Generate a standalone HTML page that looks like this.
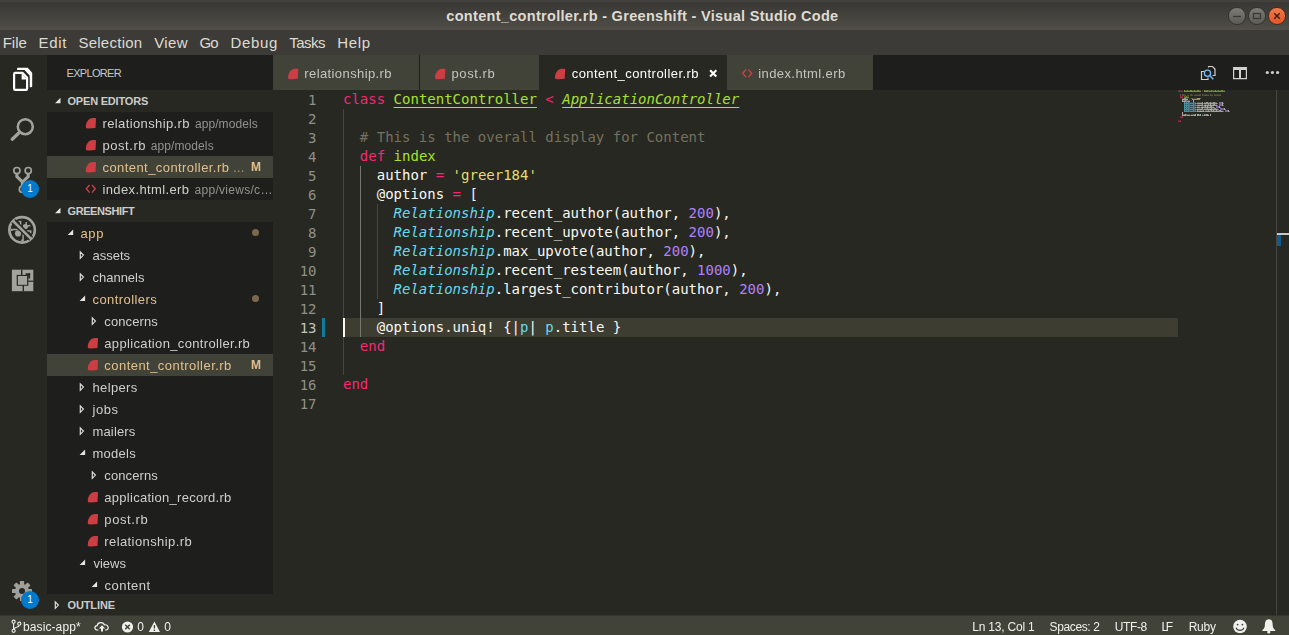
<!DOCTYPE html>
<html lang="en">
<head>
<meta charset="utf-8">
<title>content_controller.rb - Greenshift - Visual Studio Code</title>
<style>
*{box-sizing:border-box;margin:0;padding:0}
html,body{width:1289px;height:635px;overflow:hidden;background:#272822}
body{position:relative;font-family:"Liberation Sans","DejaVu Sans",sans-serif;font-size:13px;color:#f8f8f2}
.abs{position:absolute}
.t{position:absolute;white-space:pre;line-height:20px;height:20px}
#titlebar{left:0;top:0;width:1289px;height:30px;background:linear-gradient(#42413c 0,#42413c 5%,#3a3935 8%,#3c3b37 25%,#514f48 100%)}
#menubar{left:0;top:30px;width:1289px;height:25px;background:#3c3b37}
#activity{left:0;top:55px;width:47px;height:561px;background:#272822}
#sidebar{left:47px;top:55px;width:226px;height:539px;background:#1e1f1c}
.hdr{position:absolute;left:47px;width:226px;height:22px;background:#272822}
.sel{position:absolute;left:47px;width:226px;height:22px;background:#414339}
#tabs{left:273px;top:55px;width:1016px;height:35px;background:#1e1f1c}
.tab{position:absolute;top:55px;height:35px;background:#414339}
.tab.active{background:#272822}
#status{left:0;top:615px;width:1289px;height:20px;background:#414339;border-top:1px solid #34352e}
#editor{left:273px;top:90px;width:1016px;height:525px;background:#272822;overflow:hidden}
.ln{position:absolute;left:0;width:43.5px;text-align:right;height:19px;line-height:21px;font-family:"DejaVu Sans Mono","Liberation Mono",monospace;font-size:14px;color:#90908a}
.ln.cur{color:#c2c2bf}
.cl{position:absolute;left:70px;height:19px;line-height:19px;font-family:"DejaVu Sans Mono","Liberation Mono",monospace;font-size:14px;color:#f8f8f2;white-space:pre}
.k{color:#f92672}.g{color:#a6e22e}.c{color:#75715e}.s{color:#e6db74}.n{color:#ae81ff}.b{color:#66d9ef}.i{font-style:italic}.u{text-decoration:underline;text-decoration-thickness:1px;text-underline-offset:2.5px}
.gl{position:absolute;left:0;top:0;width:1289px;height:635px;will-change:transform}
.guide{position:absolute;width:1px;background:#464741}
.badge{position:absolute;width:18px;height:18px;border-radius:9px;background:#007acc}
.wb{position:absolute;top:7.4px;width:17.4px;height:17.4px;border-radius:50%;border:1px solid #33322e;background:linear-gradient(#7d7b75,#5d5b55)}
</style>
</head>
<body>
<div id="titlebar" class="abs"></div>
<div id="menubar" class="abs"></div>
<!-- window buttons -->
<div class="wb" style="left:1228.3px"></div>
<div class="wb" style="left:1248.3px"></div>
<div class="wb" style="left:1268.3px;background:linear-gradient(#f2794a,#e35527);border-color:#4a2a1c"></div>
<svg class="abs" style="left:1228px;top:7px" width="60" height="19" viewBox="0 0 60 19">
<path d="M5 9.5 H13" stroke="#3a3935" stroke-width="1.3"/>
<rect x="25.5" y="6.5" width="7" height="5" fill="none" stroke="#3a3935" stroke-width="1.3"/>
<path d="M46.2 6.2 L51.8 11.8 M51.8 6.2 L46.2 11.8" stroke="#3d1d10" stroke-width="1.4"/>
</svg>

<div id="activity" class="abs"></div>
<div id="sidebar" class="abs"></div>
<div class="hdr" style="top:90px"></div>
<div class="hdr" style="top:200px"></div>
<div class="sel" style="top:156px"></div>
<div class="sel" style="top:354px"></div>
<div id="tabs" class="abs"></div>
<div class="tab" style="left:273px;width:146px"></div>
<div class="tab" style="left:420px;width:118.5px"></div>
<div class="tab active" style="left:539px;width:187.5px"></div>
<div class="tab" style="left:727px;width:146px"></div>

<div id="editor" class="abs">
<div class="abs" style="left:70px;top:228px;width:835px;height:19px;background:#3e3d32"></div>
<div class="guide" style="left:70px;top:19px;height:266px"></div>
<div class="guide" style="left:87px;top:76px;height:171px;background:#767771"></div>
<div class="guide" style="left:104px;top:114px;height:95px"></div>
<div class="abs" style="left:70px;top:228px;width:2px;height:19px;background:#f8f8f0"></div>
<div class="abs" style="left:49px;top:228px;width:3px;height:19px;background:#0c7d9d"></div>
<div class="ln" style="top:0px">1</div><div class="cl" style="top:0px"><span class="k">class</span> <span class="g u">ContentController</span> <span class="k">&lt;</span> <span class="g i u">ApplicationController</span></div>
<div class="ln" style="top:19px">2</div><div class="cl" style="top:19px"></div>
<div class="ln" style="top:38px">3</div><div class="cl" style="top:38px">  <span class="c"># This is the overall display for Content</span></div>
<div class="ln" style="top:57px">4</div><div class="cl" style="top:57px">  <span class="k">def</span> <span class="g">index</span></div>
<div class="ln" style="top:76px">5</div><div class="cl" style="top:76px">    author <span class="k">=</span> <span class="s">&#x27;greer184&#x27;</span></div>
<div class="ln" style="top:95px">6</div><div class="cl" style="top:95px">    @options <span class="k">=</span> [</div>
<div class="ln" style="top:114px">7</div><div class="cl" style="top:114px">      <span class="b i">Relationship</span>.recent_author(author, <span class="n">200</span>),</div>
<div class="ln" style="top:133px">8</div><div class="cl" style="top:133px">      <span class="b i">Relationship</span>.recent_upvote(author, <span class="n">200</span>),</div>
<div class="ln" style="top:152px">9</div><div class="cl" style="top:152px">      <span class="b i">Relationship</span>.max_upvote(author, <span class="n">200</span>),</div>
<div class="ln" style="top:171px">10</div><div class="cl" style="top:171px">      <span class="b i">Relationship</span>.recent_resteem(author, <span class="n">1000</span>),</div>
<div class="ln" style="top:190px">11</div><div class="cl" style="top:190px">      <span class="b i">Relationship</span>.largest_contributor(author, <span class="n">200</span>),</div>
<div class="ln" style="top:209px">12</div><div class="cl" style="top:209px">    ]</div>
<div class="ln cur" style="top:228px">13</div><div class="cl" style="top:228px">    @options.uniq! {|<span class="b">p</span>| <span class="b">p</span>.title }</div>
<div class="ln" style="top:247px">14</div><div class="cl" style="top:247px">  <span class="k">end</span></div>
<div class="ln" style="top:266px">15</div><div class="cl" style="top:266px"></div>
<div class="ln" style="top:285px">16</div><div class="cl" style="top:285px"><span class="k">end</span></div>
<div class="ln" style="top:304px">17</div><div class="cl" style="top:304px"></div>
<div class="abs" style="left:1003px;top:0;width:1px;height:525px;background:#46463f"></div>
<div class="abs" style="left:1004px;top:143px;width:12px;height:2px;background:#c8c8c0"></div>
<div class="abs" style="left:1004px;top:145px;width:4px;height:11px;background:#125b8d"></div>
</div>
<svg class="abs" style="left:1178px;top:90px" width="98" height="40" viewBox="0 0 98 40" fill="none" stroke-width="1" shape-rendering="crispEdges"><path d="M0 0.5h1M2 0.5h1M3 0.5h1M4 0.5h1M24 0.5h1M3 6.5h1M11 8.5h1M13 10.5h1M2 26.5h1M3 26.5h1M0 30.5h1M1 30.5h1" stroke="#f92672" stroke-opacity="0.22"/><path d="M0 1.5h1M1 1.5h1M2 1.5h1M3 1.5h1M4 1.5h1M2 7.5h1M3 7.5h1M4 7.5h1M2 27.5h1M3 27.5h1M4 27.5h1M0 31.5h1M1 31.5h1M2 31.5h1" stroke="#f92672" stroke-opacity="0.58"/><path d="M1 0.5h1M2 6.5h1M4 6.5h1M4 26.5h1M2 30.5h1" stroke="#f92672" stroke-opacity="0.54"/><path d="M6 0.5h1M6 1.5h1M13 0.5h1M13 1.5h1M26 0.5h1M26 1.5h1M37 0.5h1M37 1.5h1" stroke="#a6e22e" stroke-opacity="0.61"/><path d="M7 0.5h1M8 0.5h1M10 0.5h1M11 0.5h1M14 0.5h1M15 0.5h1M17 0.5h1M18 0.5h1M21 0.5h1M22 0.5h1M31 0.5h1M32 0.5h1M35 0.5h1M36 0.5h1M38 0.5h1M39 0.5h1M41 0.5h1M42 0.5h1M45 0.5h1M46 0.5h1M7 6.5h1M9 6.5h1M10 6.5h1" stroke="#a6e22e" stroke-opacity="0.22"/><path d="M7 1.5h1M8 1.5h1M9 1.5h1M10 1.5h1M11 1.5h1M12 1.5h1M14 1.5h1M15 1.5h1M16 1.5h1M17 1.5h1M18 1.5h1M19 1.5h1M20 1.5h1M21 1.5h1M22 1.5h1M29 1.5h1M31 1.5h1M32 1.5h1M33 1.5h1M35 1.5h1M36 1.5h1M38 1.5h1M39 1.5h1M40 1.5h1M41 1.5h1M42 1.5h1M43 1.5h1M44 1.5h1M45 1.5h1M46 1.5h1M7 7.5h1M8 7.5h1M9 7.5h1M10 7.5h1" stroke="#a6e22e" stroke-opacity="0.58"/><path d="M9 0.5h1M12 0.5h1M16 0.5h1M19 0.5h1M20 0.5h1M29 0.5h1M33 0.5h1M40 0.5h1M43 0.5h1M44 0.5h1M8 6.5h1" stroke="#a6e22e" stroke-opacity="0.54"/><path d="M24 1.5h1M11 9.5h1M13 11.5h1" stroke="#f92672" stroke-opacity="0.29"/><path d="M27 0.5h1M28 0.5h1" stroke="#a6e22e" stroke-opacity="0.32"/><path d="M27 1.5h1M28 1.5h1" stroke="#a6e22e" stroke-opacity="0.68"/><path d="M30 0.5h1M34 0.5h1M6 6.5h1" stroke="#a6e22e" stroke-opacity="0.36"/><path d="M30 1.5h1M34 1.5h1M6 7.5h1" stroke="#a6e22e" stroke-opacity="0.43"/><path d="M2 4.5h1M2 5.5h1M4 4.5h1M4 5.5h1M36 4.5h1M36 5.5h1" stroke="#75715e" stroke-opacity="0.61"/><path d="M5 4.5h1M12 4.5h1M13 4.5h1M21 4.5h1M22 4.5h1M24 4.5h1M28 4.5h1M32 4.5h1M39 4.5h1M42 4.5h1" stroke="#75715e" stroke-opacity="0.54"/><path d="M5 5.5h1M7 5.5h1M10 5.5h1M12 5.5h1M13 5.5h1M14 5.5h1M16 5.5h1M17 5.5h1M18 5.5h1M19 5.5h1M20 5.5h1M21 5.5h1M22 5.5h1M24 5.5h1M26 5.5h1M28 5.5h1M29 5.5h1M32 5.5h1M33 5.5h1M34 5.5h1M37 5.5h1M38 5.5h1M39 5.5h1M40 5.5h1M41 5.5h1M42 5.5h1" stroke="#75715e" stroke-opacity="0.58"/><path d="M6 4.5h1M9 4.5h1M25 4.5h1" stroke="#75715e" stroke-opacity="0.36"/><path d="M6 5.5h1M9 5.5h1M25 5.5h1" stroke="#75715e" stroke-opacity="0.43"/><path d="M7 4.5h1M10 4.5h1M14 4.5h1M16 4.5h1M17 4.5h1M18 4.5h1M19 4.5h1M20 4.5h1M26 4.5h1M29 4.5h1M33 4.5h1M34 4.5h1M37 4.5h1M38 4.5h1M40 4.5h1M41 4.5h1" stroke="#75715e" stroke-opacity="0.22"/><path d="M27 4.5h1M30 4.5h1" stroke="#75715e" stroke-opacity="0.32"/><path d="M27 5.5h1M30 5.5h1" stroke="#75715e" stroke-opacity="0.68"/><path d="M4 8.5h1M5 8.5h1M8 8.5h1M9 8.5h1M5 10.5h1M9 10.5h1M10 10.5h1M11 10.5h1M19 12.5h1M20 12.5h1M21 12.5h1M22 12.5h1M23 12.5h1M26 12.5h1M27 12.5h1M30 12.5h1M31 12.5h1M33 12.5h1M34 12.5h1M37 12.5h1M38 12.5h1M19 14.5h1M20 14.5h1M21 14.5h1M22 14.5h1M23 14.5h1M26 14.5h1M28 14.5h1M29 14.5h1M31 14.5h1M33 14.5h1M34 14.5h1M37 14.5h1M38 14.5h1M20 16.5h1M21 16.5h1M23 16.5h1M25 16.5h1M26 16.5h1M28 16.5h1M30 16.5h1M31 16.5h1M34 16.5h1M35 16.5h1M19 18.5h1M20 18.5h1M21 18.5h1M22 18.5h1M23 18.5h1M26 18.5h1M27 18.5h1M28 18.5h1M30 18.5h1M31 18.5h1M34 18.5h1M35 18.5h1M38 18.5h1M39 18.5h1M20 20.5h1M21 20.5h1M23 20.5h1M24 20.5h1M27 20.5h1M28 20.5h1M29 20.5h1M31 20.5h1M34 20.5h1M36 20.5h1M37 20.5h1M39 20.5h1M40 20.5h1M43 20.5h1M44 20.5h1M5 24.5h1M9 24.5h1M10 24.5h1M11 24.5h1M13 24.5h1M14 24.5h1M30 24.5h1" stroke="#f8f8f2" stroke-opacity="0.22"/><path d="M4 9.5h1M5 9.5h1M6 9.5h1M7 9.5h1M8 9.5h1M9 9.5h1M5 11.5h1M7 11.5h1M9 11.5h1M10 11.5h1M11 11.5h1M19 13.5h1M20 13.5h1M21 13.5h1M22 13.5h1M23 13.5h1M24 13.5h1M26 13.5h1M27 13.5h1M28 13.5h1M29 13.5h1M30 13.5h1M31 13.5h1M33 13.5h1M34 13.5h1M35 13.5h1M36 13.5h1M37 13.5h1M38 13.5h1M19 15.5h1M20 15.5h1M21 15.5h1M22 15.5h1M23 15.5h1M24 15.5h1M26 15.5h1M28 15.5h1M29 15.5h1M30 15.5h1M31 15.5h1M33 15.5h1M34 15.5h1M35 15.5h1M36 15.5h1M37 15.5h1M38 15.5h1M20 17.5h1M21 17.5h1M23 17.5h1M25 17.5h1M26 17.5h1M27 17.5h1M28 17.5h1M30 17.5h1M31 17.5h1M32 17.5h1M33 17.5h1M34 17.5h1M35 17.5h1M19 19.5h1M20 19.5h1M21 19.5h1M22 19.5h1M23 19.5h1M24 19.5h1M26 19.5h1M27 19.5h1M28 19.5h1M29 19.5h1M30 19.5h1M31 19.5h1M34 19.5h1M35 19.5h1M36 19.5h1M37 19.5h1M38 19.5h1M39 19.5h1M19 21.5h1M20 21.5h1M21 21.5h1M23 21.5h1M24 21.5h1M25 21.5h1M27 21.5h1M28 21.5h1M29 21.5h1M30 21.5h1M31 21.5h1M33 21.5h1M34 21.5h1M35 21.5h1M36 21.5h1M37 21.5h1M39 21.5h1M40 21.5h1M41 21.5h1M42 21.5h1M43 21.5h1M44 21.5h1M5 25.5h1M7 25.5h1M9 25.5h1M10 25.5h1M11 25.5h1M13 25.5h1M14 25.5h1M26 25.5h1M28 25.5h1M29 25.5h1M30 25.5h1" stroke="#f8f8f2" stroke-opacity="0.58"/><path d="M6 8.5h1M7 8.5h1M7 10.5h1M24 12.5h1M28 12.5h1M29 12.5h1M35 12.5h1M36 12.5h1M24 14.5h1M30 14.5h1M35 14.5h1M36 14.5h1M27 16.5h1M32 16.5h1M33 16.5h1M24 18.5h1M29 18.5h1M36 18.5h1M37 18.5h1M19 20.5h1M25 20.5h1M30 20.5h1M33 20.5h1M35 20.5h1M41 20.5h1M42 20.5h1M7 24.5h1M26 24.5h1M28 24.5h1M29 24.5h1" stroke="#f8f8f2" stroke-opacity="0.54"/><path d="M13 8.5h1M22 8.5h1" stroke="#e6db74" stroke-opacity="0.36"/><path d="M14 8.5h1" stroke="#e6db74" stroke-opacity="0.32"/><path d="M14 9.5h1" stroke="#e6db74" stroke-opacity="0.68"/><path d="M15 8.5h1M16 8.5h1M17 8.5h1M18 8.5h1" stroke="#e6db74" stroke-opacity="0.22"/><path d="M15 9.5h1M16 9.5h1M17 9.5h1M18 9.5h1" stroke="#e6db74" stroke-opacity="0.58"/><path d="M19 8.5h1M19 9.5h1M20 8.5h1M20 9.5h1M21 8.5h1M21 9.5h1" stroke="#e6db74" stroke-opacity="0.61"/><path d="M4 10.5h1M4 11.5h1M15 10.5h1M15 11.5h1M32 12.5h1M32 13.5h1M44 12.5h1M44 13.5h1M32 14.5h1M32 15.5h1M44 14.5h1M44 15.5h1M29 16.5h1M29 17.5h1M41 16.5h1M41 17.5h1M33 18.5h1M33 19.5h1M46 18.5h1M46 19.5h1M38 20.5h1M38 21.5h1M50 20.5h1M50 21.5h1M4 22.5h1M4 23.5h1M4 24.5h1M4 25.5h1M17 24.5h1M17 25.5h1M19 24.5h1M19 25.5h1M20 24.5h1M20 25.5h1M22 24.5h1M22 25.5h1M32 24.5h1M32 25.5h1" stroke="#f8f8f2" stroke-opacity="0.61"/><path d="M6 10.5h1M18 13.5h1M25 13.5h1M39 13.5h1M45 13.5h1M18 15.5h1M25 15.5h1M27 14.5h1M39 15.5h1M45 15.5h1M18 17.5h1M22 17.5h1M24 16.5h1M36 17.5h1M42 17.5h1M18 19.5h1M25 19.5h1M40 19.5h1M47 19.5h1M18 21.5h1M22 20.5h1M26 21.5h1M45 21.5h1M51 21.5h1M6 24.5h1M12 25.5h1M16 24.5h1M25 25.5h1" stroke="#f8f8f2" stroke-opacity="0.32"/><path d="M6 11.5h1M27 15.5h1M19 17.5h1M24 17.5h1M32 19.5h1M22 21.5h1M6 25.5h1M16 25.5h1" stroke="#f8f8f2" stroke-opacity="0.68"/><path d="M8 10.5h1M32 20.5h1M8 24.5h1M15 24.5h1M27 24.5h1" stroke="#f8f8f2" stroke-opacity="0.36"/><path d="M8 11.5h1M32 21.5h1M8 25.5h1M15 25.5h1M27 25.5h1" stroke="#f8f8f2" stroke-opacity="0.43"/><path d="M6 12.5h1M6 13.5h1M6 14.5h1M6 15.5h1M6 16.5h1M6 17.5h1M6 18.5h1M6 19.5h1M6 20.5h1M6 21.5h1" stroke="#66d9ef" stroke-opacity="0.61"/><path d="M7 12.5h1M9 12.5h1M12 12.5h1M13 12.5h1M14 12.5h1M7 14.5h1M9 14.5h1M12 14.5h1M13 14.5h1M14 14.5h1M7 16.5h1M9 16.5h1M12 16.5h1M13 16.5h1M14 16.5h1M7 18.5h1M9 18.5h1M12 18.5h1M13 18.5h1M14 18.5h1M7 20.5h1M9 20.5h1M12 20.5h1M13 20.5h1M14 20.5h1" stroke="#66d9ef" stroke-opacity="0.22"/><path d="M7 13.5h1M8 13.5h1M9 13.5h1M10 13.5h1M12 13.5h1M13 13.5h1M14 13.5h1M15 13.5h1M7 15.5h1M8 15.5h1M9 15.5h1M10 15.5h1M12 15.5h1M13 15.5h1M14 15.5h1M15 15.5h1M7 17.5h1M8 17.5h1M9 17.5h1M10 17.5h1M12 17.5h1M13 17.5h1M14 17.5h1M15 17.5h1M7 19.5h1M8 19.5h1M9 19.5h1M10 19.5h1M12 19.5h1M13 19.5h1M14 19.5h1M15 19.5h1M7 21.5h1M8 21.5h1M9 21.5h1M10 21.5h1M12 21.5h1M13 21.5h1M14 21.5h1M15 21.5h1" stroke="#66d9ef" stroke-opacity="0.58"/><path d="M8 12.5h1M10 12.5h1M15 12.5h1M8 14.5h1M10 14.5h1M15 14.5h1M8 16.5h1M10 16.5h1M15 16.5h1M8 18.5h1M10 18.5h1M15 18.5h1M8 20.5h1M10 20.5h1M15 20.5h1" stroke="#66d9ef" stroke-opacity="0.54"/><path d="M11 12.5h1M16 12.5h1M11 14.5h1M16 14.5h1M11 16.5h1M16 16.5h1M11 18.5h1M16 18.5h1M11 20.5h1M16 20.5h1" stroke="#66d9ef" stroke-opacity="0.36"/><path d="M11 13.5h1M16 13.5h1M11 15.5h1M16 15.5h1M11 17.5h1M16 17.5h1M11 19.5h1M16 19.5h1M11 21.5h1M16 21.5h1" stroke="#66d9ef" stroke-opacity="0.43"/><path d="M17 12.5h1M17 14.5h1M17 16.5h1M17 18.5h1M17 20.5h1M21 24.5h1M24 24.5h1" stroke="#66d9ef" stroke-opacity="0.32"/><path d="M17 13.5h1M17 15.5h1M17 17.5h1M17 19.5h1M17 21.5h1M21 25.5h1M24 25.5h1" stroke="#66d9ef" stroke-opacity="0.68"/><path d="M41 12.5h1M41 13.5h1M42 12.5h1M42 13.5h1M43 12.5h1M43 13.5h1M41 14.5h1M41 15.5h1M42 14.5h1M42 15.5h1M43 14.5h1M43 15.5h1M38 16.5h1M38 17.5h1M39 16.5h1M39 17.5h1M40 16.5h1M40 17.5h1M42 18.5h1M42 19.5h1M43 18.5h1M43 19.5h1M44 18.5h1M44 19.5h1M45 18.5h1M45 19.5h1M47 20.5h1M47 21.5h1M48 20.5h1M48 21.5h1M49 20.5h1M49 21.5h1" stroke="#ae81ff" stroke-opacity="0.61"/><path d="M19 16.5h1M32 18.5h1" stroke="#f8f8f2" stroke-opacity="0.29"/></svg>

<!-- activity icons -->
<svg class="abs" style="left:0;top:55px" width="47" height="560" viewBox="0 0 47 560">
<!-- files -->
<path d="M17.6 12.8 H27.7 L32.2 17.8 V31 Q32.2 32.2 31 32.2 L29.6 32.2 V20.5 L24.5 14.9 H17 Q17 12.8 17.6 12.8 Z" fill="#fff"/>
<g fill="none" stroke-linejoin="round">
<path d="M14.1 19 Q14.1 17.9 15.2 17.9 H22.6 L27.1 22.8 V33.8 Q27.1 34.9 26 34.9 H15.2 Q14.1 34.9 14.1 33.8 Z" stroke="#272822" stroke-width="4.6" fill="#272822"/>
<path d="M14.1 19 Q14.1 17.9 15.2 17.9 H22.6 L27.1 22.8 V33.8 Q27.1 34.9 26 34.9 H15.2 Q14.1 34.9 14.1 33.8 Z" stroke="#fff" stroke-width="2.2"/>
</g>
<path d="M21.6 18.2 V24.4 H27 Z" fill="#fff"/>
<!-- search -->
<g fill="none" stroke="#a3a39e">
<circle cx="25.3" cy="71.7" r="7.5" stroke-width="2.5"/>
<path d="M19.6 77.2 L12.2 84.2" stroke-width="3.3" stroke-linecap="round"/>
</g>
<!-- git -->
<g fill="none" stroke="#a3a39e" stroke-width="1.7">
<circle cx="16.9" cy="115.6" r="3.1"/><circle cx="28.2" cy="115.6" r="3.1"/><circle cx="22.4" cy="134.2" r="3.1"/>
<path d="M16.9 118.6 V121.5 L22.4 127 V131 M28.2 118.6 V121.5 L22.4 127" stroke-width="3.1"/>
</g>
<!-- debug -->
<g fill="none" stroke="#a3a39e">
<circle cx="22.1" cy="174.9" r="12.7" stroke-width="2.7"/>
<circle cx="18.1" cy="178.4" r="3.1" fill="#a3a39e" stroke="none"/>
<circle cx="25.4" cy="171.6" r="2.6" fill="#a3a39e" stroke="none"/>
<path d="M18.6 166.6 H20.6 V171 M26.2 167 V170 M27.4 171 L30.4 170.5 M11.8 176 V174.6 H17.6 M26.2 176.1 H30.7 V178.2 M23.1 179.2 V185.2 H21.2" stroke-width="1.5"/>
<path d="M14.6 164.5 L32.6 182.3 M11.7 167.5 L29.7 185.3" stroke="#272822" stroke-width="1.2"/>
<path d="M13.1 166 L31.1 183.8" stroke-width="2.6"/>
</g>
<!-- extensions -->
<g fill="#a3a39e">
<rect x="11.9" y="214.7" width="21.4" height="21.5"/>
<g fill="#272822">
<rect x="21" y="214.7" width="1.4" height="6"/>
<rect x="22.6" y="230" width="1.4" height="6.2"/>
<rect x="28" y="225.6" width="5.3" height="1.2"/>
<rect x="16.7" y="219.9" width="11.6" height="10.9"/>
<rect x="25.6" y="218.3" width="4.5" height="2.5"/>
<rect x="28.3" y="218.3" width="1.8" height="5.2"/>
</g>
<rect x="17.9" y="221" width="9.2" height="8.8"/>
</g>
<!-- gear -->
<g transform="translate(22 536)" fill="#a0a09b">
<circle r="7"/>
<rect x="-2.1" y="-10" width="4.2" height="20" rx="0.6"/>
<rect x="-2.1" y="-10" width="4.2" height="20" rx="0.6" transform="rotate(45)"/>
<rect x="-2.1" y="-10" width="4.2" height="20" rx="0.6" transform="rotate(90)"/>
<rect x="-2.1" y="-10" width="4.2" height="20" rx="0.6" transform="rotate(135)"/>
<circle r="3" fill="#272822"/>
</g>
</svg>
<div class="badge" style="left:21px;top:180px"></div>
<div class="badge" style="left:21px;top:591px"></div>

<!-- tree dots -->
<div class="abs" style="left:252.2px;top:228.8px;width:7px;height:7px;border-radius:50%;background:#7a6a4d"></div>
<div class="abs" style="left:252.2px;top:294.8px;width:7px;height:7px;border-radius:50%;background:#7a6a4d"></div>

<!-- tab close + editor actions -->
<svg class="abs" style="left:1195px;top:60px" width="94" height="26" viewBox="0 0 94 26">
<g fill="none" stroke="#d0d0cc" stroke-width="1.2">
<path d="M13.5 7.5 V6.5 H17.5 L20 9 V15.5 H17.5"/>
<path d="M9.5 11.5 H6.5 V19.5 H13 V17.5"/>
<circle cx="12.5" cy="13.3" r="3.1" stroke="#75beff" stroke-width="1.3"/>
<path d="M14.8 15.7 L18.3 19.3" stroke="#75beff" stroke-width="1.4"/>
</g>
<g fill="#d0d0cc">
<path d="M38 7 H52 V19.2 H38 Z M39.2 10 V18 H44 V10 Z M46 10 V18 H50.8 V10 Z" fill-rule="evenodd"/>
<circle cx="72.3" cy="12.5" r="1.6"/><circle cx="77.4" cy="12.5" r="1.6"/><circle cx="82.6" cy="12.5" r="1.6"/>
</g>
</svg>
<svg class="abs" style="left:708px;top:68px" width="11" height="11" viewBox="0 0 11 11"><path d="M2.1 2.2 L8.3 8.4 M8.3 2.2 L2.1 8.4" stroke="#ffffff" stroke-width="2.1"/></svg>

<svg class="abs" style="left:0;top:0" width="1289" height="635" viewBox="0 0 1289 635">
<path transform="translate(85.60 117.80)" d="M0.2 8.6 C0.4 4.5 3 0.4 7.2 0.3 L9.6 0.3 Q10.5 0.3 10.4 1.2 L9.9 10 Q9.9 10.3 9.4 10.3 L3.5 10.8 L0.8 10.5 Q0.1 10.3 0.2 8.6 Z" fill="#cc3e44"/>
<path transform="translate(85.60 139.80)" d="M0.2 8.6 C0.4 4.5 3 0.4 7.2 0.3 L9.6 0.3 Q10.5 0.3 10.4 1.2 L9.9 10 Q9.9 10.3 9.4 10.3 L3.5 10.8 L0.8 10.5 Q0.1 10.3 0.2 8.6 Z" fill="#cc3e44"/>
<path transform="translate(85.60 161.80)" d="M0.2 8.6 C0.4 4.5 3 0.4 7.2 0.3 L9.6 0.3 Q10.5 0.3 10.4 1.2 L9.9 10 Q9.9 10.3 9.4 10.3 L3.5 10.8 L0.8 10.5 Q0.1 10.3 0.2 8.6 Z" fill="#cc3e44"/>
<path transform="translate(85.20 183.50)" d="M4.4 1.5 L1.1 5.3 L4.4 9.1 M6.8 1.5 L10.1 5.3 L6.8 9.1" fill="none" stroke="#cc3e44" stroke-width="1.4"/>
<path transform="translate(87.60 337.80)" d="M0.2 8.6 C0.4 4.5 3 0.4 7.2 0.3 L9.6 0.3 Q10.5 0.3 10.4 1.2 L9.9 10 Q9.9 10.3 9.4 10.3 L3.5 10.8 L0.8 10.5 Q0.1 10.3 0.2 8.6 Z" fill="#cc3e44"/>
<path transform="translate(87.60 359.80)" d="M0.2 8.6 C0.4 4.5 3 0.4 7.2 0.3 L9.6 0.3 Q10.5 0.3 10.4 1.2 L9.9 10 Q9.9 10.3 9.4 10.3 L3.5 10.8 L0.8 10.5 Q0.1 10.3 0.2 8.6 Z" fill="#cc3e44"/>
<path transform="translate(87.60 491.80)" d="M0.2 8.6 C0.4 4.5 3 0.4 7.2 0.3 L9.6 0.3 Q10.5 0.3 10.4 1.2 L9.9 10 Q9.9 10.3 9.4 10.3 L3.5 10.8 L0.8 10.5 Q0.1 10.3 0.2 8.6 Z" fill="#cc3e44"/>
<path transform="translate(87.60 513.80)" d="M0.2 8.6 C0.4 4.5 3 0.4 7.2 0.3 L9.6 0.3 Q10.5 0.3 10.4 1.2 L9.9 10 Q9.9 10.3 9.4 10.3 L3.5 10.8 L0.8 10.5 Q0.1 10.3 0.2 8.6 Z" fill="#cc3e44"/>
<path transform="translate(87.60 535.80)" d="M0.2 8.6 C0.4 4.5 3 0.4 7.2 0.3 L9.6 0.3 Q10.5 0.3 10.4 1.2 L9.9 10 Q9.9 10.3 9.4 10.3 L3.5 10.8 L0.8 10.5 Q0.1 10.3 0.2 8.6 Z" fill="#cc3e44"/>
<path transform="translate(287.90 68.40)" d="M0.2 8.6 C0.4 4.5 3 0.4 7.2 0.3 L9.6 0.3 Q10.5 0.3 10.4 1.2 L9.9 10 Q9.9 10.3 9.4 10.3 L3.5 10.8 L0.8 10.5 Q0.1 10.3 0.2 8.6 Z" fill="#cc3e44"/>
<path transform="translate(434.90 68.40)" d="M0.2 8.6 C0.4 4.5 3 0.4 7.2 0.3 L9.6 0.3 Q10.5 0.3 10.4 1.2 L9.9 10 Q9.9 10.3 9.4 10.3 L3.5 10.8 L0.8 10.5 Q0.1 10.3 0.2 8.6 Z" fill="#cc3e44"/>
<path transform="translate(554.80 68.40)" d="M0.2 8.6 C0.4 4.5 3 0.4 7.2 0.3 L9.6 0.3 Q10.5 0.3 10.4 1.2 L9.9 10 Q9.9 10.3 9.4 10.3 L3.5 10.8 L0.8 10.5 Q0.1 10.3 0.2 8.6 Z" fill="#cc3e44"/>
<path transform="translate(741.60 68.00)" d="M4.4 1.5 L1.1 5.3 L4.4 9.1 M6.8 1.5 L10.1 5.3 L6.8 9.1" fill="none" stroke="#cc3e44" stroke-width="1.4"/>
<path transform="translate(55.00 97.80)" d="M5.5 0 L5.5 5.5 L0 5.5 Z" fill="#e4e4e0"/>
<path transform="translate(55.00 207.80)" d="M5.5 0 L5.5 5.5 L0 5.5 Z" fill="#e4e4e0"/>
<path transform="translate(54.60 600.50)" d="M0.7 1.4 L3.8 4.6 L0.7 7.8 Z" fill="none" stroke="#dcdcd8" stroke-width="1.2"/>
<path transform="translate(67.70 229.60)" d="M5.5 0 L5.5 5.5 L0 5.5 Z" fill="#e4e4e0"/>
<path transform="translate(79.60 250.50)" d="M0.7 1.4 L3.8 4.6 L0.7 7.8 Z" fill="none" stroke="#dcdcd8" stroke-width="1.2"/>
<path transform="translate(79.60 272.50)" d="M0.7 1.4 L3.8 4.6 L0.7 7.8 Z" fill="none" stroke="#dcdcd8" stroke-width="1.2"/>
<path transform="translate(79.60 382.50)" d="M0.7 1.4 L3.8 4.6 L0.7 7.8 Z" fill="none" stroke="#dcdcd8" stroke-width="1.2"/>
<path transform="translate(79.60 404.50)" d="M0.7 1.4 L3.8 4.6 L0.7 7.8 Z" fill="none" stroke="#dcdcd8" stroke-width="1.2"/>
<path transform="translate(79.60 426.50)" d="M0.7 1.4 L3.8 4.6 L0.7 7.8 Z" fill="none" stroke="#dcdcd8" stroke-width="1.2"/>
<path transform="translate(79.60 295.60)" d="M5.5 0 L5.5 5.5 L0 5.5 Z" fill="#e4e4e0"/>
<path transform="translate(79.60 449.60)" d="M5.5 0 L5.5 5.5 L0 5.5 Z" fill="#e4e4e0"/>
<path transform="translate(79.60 559.60)" d="M5.5 0 L5.5 5.5 L0 5.5 Z" fill="#e4e4e0"/>
<path transform="translate(91.60 316.50)" d="M0.7 1.4 L3.8 4.6 L0.7 7.8 Z" fill="none" stroke="#dcdcd8" stroke-width="1.2"/>
<path transform="translate(91.60 470.50)" d="M0.7 1.4 L3.8 4.6 L0.7 7.8 Z" fill="none" stroke="#dcdcd8" stroke-width="1.2"/>
<path transform="translate(91.60 581.60)" d="M5.5 0 L5.5 5.5 L0 5.5 Z" fill="#e4e4e0"/>
</svg>

<div id="status" class="abs"></div>
<!-- status icons -->
<svg class="abs" style="left:0;top:615px" width="1289" height="20" viewBox="0 0 1289 20">
<g fill="none" stroke="#f0f0ec" stroke-width="1.1">
<circle cx="13.6" cy="6.7" r="1.6"/><circle cx="19.3" cy="8.7" r="1.6"/><circle cx="13.6" cy="15.8" r="1.6"/>
<path d="M13.6 8.3 V14.2 M19.3 10.3 C19.3 12.5 14 12 13.8 14.2"/>
<path d="M98.5 15 H97.5 C94 15 94.2 10.6 97.3 10.6 C97.5 6.8 103.5 6.6 104.3 9.8 C108.8 9.2 109.6 15 105.8 15 H105" stroke-width="1.2"/>
</g>
<g fill="#f0f0ec">
<path d="M102 10.2 L105.2 13.6 H103 V16.6 H101 V13.6 H98.8 Z"/>
<circle cx="127.5" cy="12" r="5.6"/>
<path d="M154.4 6.6 L160 17 H148.8 Z"/>
<circle cx="1240" cy="11.5" r="6.8"/>
<path d="M1268.8 4.2 C1272.5 4.2 1272.6 8 1272.8 11 C1273 13 1274 14 1275.2 15 V16 H1262.4 V15 C1263.6 14 1264.6 13 1264.8 11 C1265 8 1265.1 4.2 1268.8 4.2 Z"/>
<circle cx="1268.8" cy="17" r="1.6"/>
</g>
<g stroke="#414339" fill="none">
<path d="M125.2 9.7 L129.8 14.3 M129.8 9.7 L125.2 14.3" stroke-width="1.5"/>
<path d="M154.4 10 V13.6 M154.4 14.6 V16" stroke-width="1.3"/>
<circle cx="1237.6" cy="9.6" r="0.9" fill="#414339" stroke="none"/><circle cx="1242.4" cy="9.6" r="0.9" fill="#414339" stroke="none"/>
<path d="M1236 12.8 C1237.5 16.2 1242.5 16.2 1244 12.8" stroke-width="1.1"/>
</g>
</svg>

<span class="t" style="left:446.30px;top:5.70px;font-size:14.5px;color:#dfdbd2;font-weight:700;letter-spacing:0.309px;">content_controller.rb - Greenshift - Visual Studio Code</span>
<span class="t" style="left:2.70px;top:32.80px;font-size:15px;color:#dfdbd2;">File</span>
<span class="t" style="left:38.40px;top:32.80px;font-size:15px;color:#dfdbd2;letter-spacing:0.767px;">Edit</span>
<span class="t" style="left:78.40px;top:32.80px;font-size:15px;color:#dfdbd2;letter-spacing:0.262px;">Selection</span>
<span class="t" style="left:154.20px;top:32.80px;font-size:15px;color:#dfdbd2;letter-spacing:0.400px;">View</span>
<span class="t" style="left:199.50px;top:32.80px;font-size:15px;color:#dfdbd2;letter-spacing:-1.000px;">Go</span>
<span class="t" style="left:230.50px;top:32.80px;font-size:15px;color:#dfdbd2;letter-spacing:0.675px;">Debug</span>
<span class="t" style="left:289.20px;top:32.80px;font-size:15px;color:#dfdbd2;letter-spacing:-0.500px;">Tasks</span>
<span class="t" style="left:337.30px;top:32.80px;font-size:15px;color:#dfdbd2;letter-spacing:0.667px;">Help</span>
<span class="t" style="left:66.50px;top:63.30px;font-size:11px;color:#c8c8c4;letter-spacing:-0.686px;">EXPLORER</span>
<span class="t" style="left:67.50px;top:91.30px;font-size:11px;color:#cccccc;font-weight:700;letter-spacing:-0.200px;">OPEN EDITORS</span>
<span class="t" style="left:67.50px;top:201.30px;font-size:11px;color:#cccccc;font-weight:700;letter-spacing:-0.411px;">GREENSHIFT</span>
<span class="t" style="left:67.50px;top:595.10px;font-size:11px;color:#cccccc;font-weight:700;letter-spacing:-0.117px;">OUTLINE</span>
<span class="t" style="left:27.25px;top:179.20px;font-size:10px;color:#ffffff;">1</span>
<span class="t" style="left:27.25px;top:590.20px;font-size:10px;color:#ffffff;">1</span>
<div class="gl">
<span class="t" style="left:102.50px;top:113.50px;font-size:13px;color:#cfcfcb;letter-spacing:0.379px;">relationship.rb</span>
<span class="t" style="left:194.90px;top:113.90px;font-size:12px;color:#93938e;letter-spacing:0.078px;">app/models</span>
<span class="t" style="left:102.50px;top:135.50px;font-size:13px;color:#cfcfcb;letter-spacing:0.550px;">post.rb</span>
<span class="t" style="left:150.70px;top:135.90px;font-size:12px;color:#93938e;letter-spacing:0.100px;">app/models</span>
<span class="t" style="left:102.50px;top:157.50px;font-size:13px;color:#e2c08d;letter-spacing:0.430px;">content_controller.rb</span>
<span class="t" style="left:232.75px;top:157.90px;font-size:12px;color:#b09a72;">…</span>
<span class="t" style="left:250.90px;top:157.40px;font-size:12px;color:#e2c08d;font-weight:700;">M</span>
<span class="t" style="left:102.50px;top:179.50px;font-size:13px;color:#cfcfcb;letter-spacing:0.369px;">index.html.erb</span>
<span class="t" style="left:194.50px;top:179.90px;font-size:12px;color:#93938e;letter-spacing:0.291px;">app/views/c…</span>
<span class="t" style="left:80.40px;top:223.50px;font-size:13px;color:#e2c08d;letter-spacing:0.700px;">app</span>
<span class="t" style="left:92.50px;top:245.50px;font-size:13px;color:#cfcfcb;letter-spacing:-0.020px;">assets</span>
<span class="t" style="left:92.50px;top:267.50px;font-size:13px;color:#cfcfcb;letter-spacing:-0.014px;">channels</span>
<span class="t" style="left:92.50px;top:289.50px;font-size:13px;color:#e2c08d;letter-spacing:0.420px;">controllers</span>
<span class="t" style="left:104.30px;top:311.50px;font-size:13px;color:#cfcfcb;letter-spacing:0.114px;">concerns</span>
<span class="t" style="left:104.30px;top:333.50px;font-size:13px;color:#cfcfcb;letter-spacing:0.342px;">application_controller.rb</span>
<span class="t" style="left:104.30px;top:355.50px;font-size:13px;color:#e2c08d;letter-spacing:0.460px;">content_controller.rb</span>
<span class="t" style="left:92.50px;top:377.50px;font-size:13px;color:#cfcfcb;letter-spacing:0.350px;">helpers</span>
<span class="t" style="left:92.60px;top:399.50px;font-size:13px;color:#cfcfcb;letter-spacing:0.500px;">jobs</span>
<span class="t" style="left:92.50px;top:421.50px;font-size:13px;color:#cfcfcb;letter-spacing:0.150px;">mailers</span>
<span class="t" style="left:92.50px;top:443.50px;font-size:13px;color:#cfcfcb;letter-spacing:0.260px;">models</span>
<span class="t" style="left:104.30px;top:465.50px;font-size:13px;color:#cfcfcb;letter-spacing:0.114px;">concerns</span>
<span class="t" style="left:104.30px;top:487.50px;font-size:13px;color:#cfcfcb;letter-spacing:0.280px;">application_record.rb</span>
<span class="t" style="left:104.30px;top:509.50px;font-size:13px;color:#cfcfcb;letter-spacing:0.617px;">post.rb</span>
<span class="t" style="left:104.30px;top:531.50px;font-size:13px;color:#cfcfcb;letter-spacing:0.407px;">relationship.rb</span>
<span class="t" style="left:93.40px;top:553.50px;font-size:13px;color:#cfcfcb;letter-spacing:0.025px;">views</span>
<span class="t" style="left:104.50px;top:575.50px;font-size:13px;color:#cfcfcb;letter-spacing:0.500px;">content</span>
<span class="t" style="left:250.90px;top:355.40px;font-size:12px;color:#e2c08d;font-weight:700;">M</span>
<span class="t" style="left:304.30px;top:63.50px;font-size:13px;color:#c4c4bf;letter-spacing:0.400px;">relationship.rb</span>
<span class="t" style="left:451.50px;top:63.50px;font-size:13px;color:#c4c4bf;letter-spacing:0.583px;">post.rb</span>
<span class="t" style="left:571.70px;top:63.50px;font-size:13px;color:#ffffff;letter-spacing:0.455px;">content_controller.rb</span>
<span class="t" style="left:758.30px;top:63.50px;font-size:13px;color:#c4c4bf;letter-spacing:0.400px;">index.html.erb</span>
<span class="t" style="left:23.00px;top:617.00px;font-size:12px;color:#f0f0ec;letter-spacing:0.100px;">basic-app*</span>
<span class="t" style="left:137.15px;top:617.00px;font-size:12px;color:#f0f0ec;">0</span>
<span class="t" style="left:164.25px;top:617.00px;font-size:12px;color:#f0f0ec;">0</span>
<span class="t" style="left:972.30px;top:617.00px;font-size:12px;color:#f0f0ec;letter-spacing:-0.209px;">Ln 13, Col 1</span>
<span class="t" style="left:1049.60px;top:617.00px;font-size:12px;color:#f0f0ec;letter-spacing:-0.375px;">Spaces: 2</span>
<span class="t" style="left:1114.70px;top:617.00px;font-size:12px;color:#f0f0ec;letter-spacing:-0.350px;">UTF-8</span>
<span class="t" style="left:1161.40px;top:617.00px;font-size:12px;color:#f0f0ec;letter-spacing:-2.300px;">LF</span>
<span class="t" style="left:1188.70px;top:617.00px;font-size:12px;color:#f0f0ec;letter-spacing:-0.233px;">Ruby</span>
</div>
</body>
</html>
